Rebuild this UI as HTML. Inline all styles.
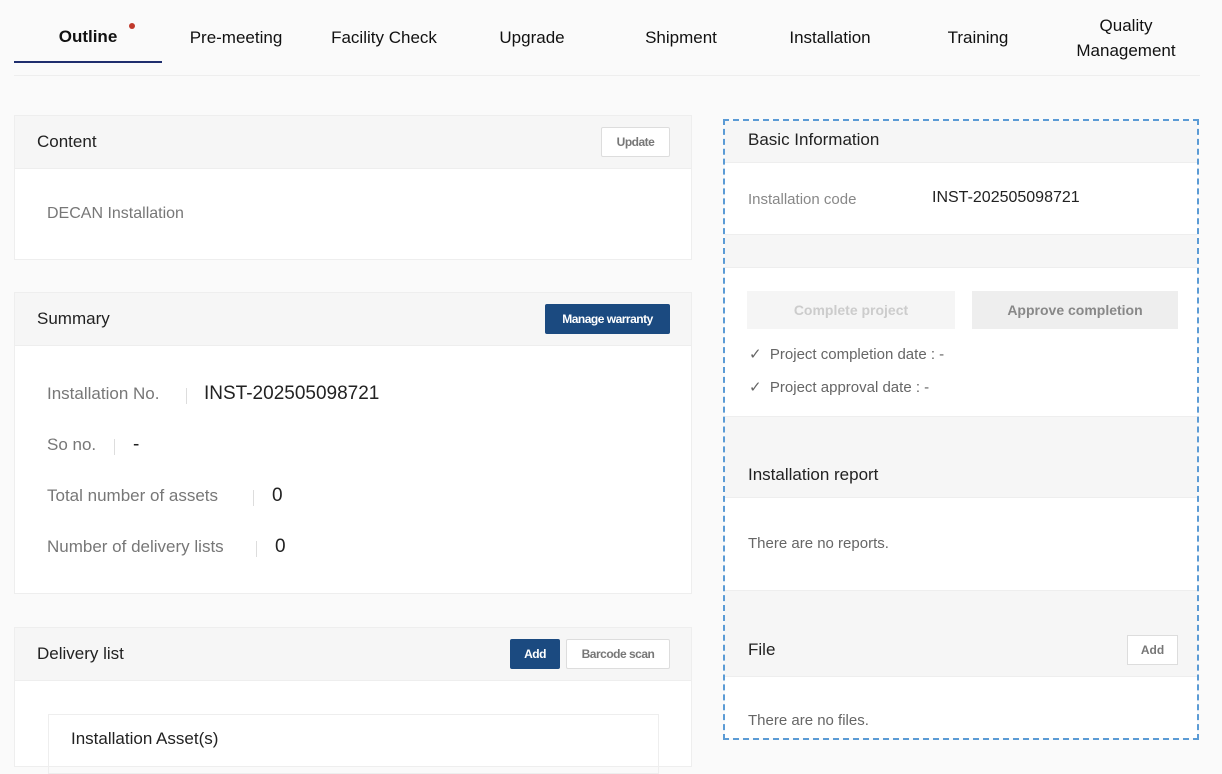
<!DOCTYPE html>
<html><head><meta charset="utf-8"><style>
*{box-sizing:border-box;margin:0;padding:0}
body{width:1222px;height:740px;overflow:hidden;background:#fafafa;font-family:"Liberation Sans",sans-serif;color:#222;position:relative}
.abs{position:absolute}
.tab{position:absolute;top:0;height:75px;display:flex;align-items:center;justify-content:center;font-size:17px;color:#111;text-align:center;line-height:25px}
.card{position:absolute;left:14px;width:678px;background:#fff;border:1px solid #eee}
.hd{height:53px;background:#f6f6f6;border-bottom:1px solid #eee;display:flex;align-items:center;padding:0 22px;font-size:17px;color:#222;position:relative}
.btn{position:absolute;top:11px;height:30px;font-size:12px;font-weight:bold;display:flex;align-items:center;justify-content:center;border-radius:2px;letter-spacing:-0.5px}
.w{background:#fff;border:1px solid #ddd;color:#777}
.b{background:#1b4a80;color:#fff}
.lab{position:absolute;left:32px;font-size:17px;color:#777}
.val{position:absolute;font-size:19px;color:#222}
.sep{position:absolute;width:1px;height:16px;background:#ddd}
.g{position:absolute;left:725px;width:472px;background:#f6f6f6}
</style></head><body>
<div class="tab" style="left:14px;width:148px;font-weight:bold;padding-bottom:2px">Outline</div>
<div class="abs" style="left:129px;top:23px;width:6px;height:6px;border-radius:50%;background:#c0392b"></div>
<div class="abs" style="left:14px;top:61px;width:148px;height:2px;background:#1f2e6e"></div>
<div class="tab" style="left:162px;width:148px">Pre-meeting</div>
<div class="tab" style="left:310px;width:148px">Facility Check</div>
<div class="tab" style="left:458px;width:148px">Upgrade</div>
<div class="tab" style="left:606px;width:150px">Shipment</div>
<div class="tab" style="left:756px;width:148px">Installation</div>
<div class="tab" style="left:904px;width:148px">Training</div>
<div class="tab" style="left:1052px;width:148px;height:75px">Quality<br>Management</div>
<div class="abs" style="left:14px;top:75px;width:1186px;height:1px;background:#eee"></div>

<div class="card" style="top:115px;height:145px">
<div class="hd">Content<div class="btn w" style="left:586px;width:69px">Update</div></div>
<div class="abs" style="left:32px;top:89px;font-size:16px;color:#777">DECAN Installation</div>
</div>

<div class="card" style="top:292px;height:302px">
<div class="hd">Summary<div class="btn b" style="left:530px;width:125px">Manage warranty</div></div>
<div class="lab" style="top:91px">Installation No.</div><div class="sep" style="left:171px;top:95px"></div><div class="val" style="left:189px;top:90px">INST-202505098721</div>
<div class="lab" style="top:142px">So no.</div><div class="sep" style="left:99px;top:146px"></div><div class="val" style="left:118px;top:141px">-</div>
<div class="lab" style="top:193px">Total number of assets</div><div class="sep" style="left:238px;top:197px"></div><div class="val" style="left:257px;top:192px">0</div>
<div class="lab" style="top:244px">Number of delivery lists</div><div class="sep" style="left:241px;top:248px"></div><div class="val" style="left:260px;top:243px">0</div>
</div>

<div class="card" style="top:627px;height:140px">
<div class="hd">Delivery list<div class="btn b" style="left:495px;width:50px">Add</div><div class="btn w" style="left:551px;width:104px">Barcode scan</div></div>
<div class="abs" style="left:33px;top:86px;width:611px;height:60px;border:1px solid #eee;padding:14px 22px;font-size:17px">Installation Asset(s)</div>
</div>

<div class="abs" style="left:725px;top:121px;width:472px;height:617px;background:#fff"></div>
<div class="g" style="top:121px;height:42px;border-bottom:1px solid #eee"></div>
<div class="abs" style="left:748px;top:130px;font-size:17px">Basic Information</div>
<div class="abs" style="left:748px;top:191px;font-size:15px;color:#888">Installation code</div>
<div class="abs" style="left:932px;top:189px;font-size:16px">INST-202505098721</div>
<div class="g" style="top:234px;height:34px;border-top:1px solid #eee;border-bottom:1px solid #eee"></div>
<div class="abs" style="left:747px;top:291px;width:208px;height:38px;background:#f5f5f5;color:#ccc;font-size:14px;font-weight:bold;display:flex;align-items:center;justify-content:center">Complete project</div>
<div class="abs" style="left:972px;top:291px;width:206px;height:38px;background:#eee;color:#888;font-size:14px;font-weight:bold;display:flex;align-items:center;justify-content:center">Approve completion</div>
<div class="abs" style="left:749px;top:345px;font-size:15px;color:#666">✓ &nbsp;Project completion date : -</div>
<div class="abs" style="left:749px;top:378px;font-size:15px;color:#666">✓ &nbsp;Project approval date : -</div>
<div class="g" style="top:416px;height:82px;border-top:1px solid #eee;border-bottom:1px solid #eee"></div>
<div class="abs" style="left:748px;top:465px;font-size:17px">Installation report</div>
<div class="abs" style="left:748px;top:535px;font-size:15px;color:#666">There are no reports.</div>
<div class="g" style="top:590px;height:87px;border-top:1px solid #eee;border-bottom:1px solid #eee"></div>
<div class="abs" style="left:748px;top:640px;font-size:17px">File</div>
<div class="abs" style="left:1127px;top:635px;width:51px;height:30px;background:#fff;border:1px solid #ddd;color:#777;font-size:12px;font-weight:bold;display:flex;align-items:center;justify-content:center">Add</div>
<div class="abs" style="left:748px;top:712px;font-size:15px;color:#666">There are no files.</div>
<div class="abs" style="left:723px;top:119px;width:476px;height:621px;border:2px dashed #5b9bd5"></div>
</body></html>
